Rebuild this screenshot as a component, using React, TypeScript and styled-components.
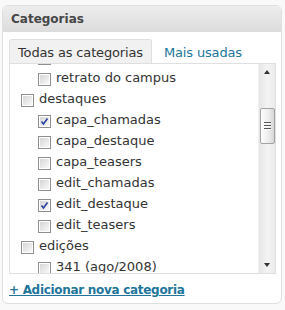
import { useLayoutEffect, useRef } from 'react';
import styled, { createGlobalStyle } from 'styled-components';

type Category = { name: string; level: number; checked?: boolean };

const categories: Category[] = [
  { name: 'agenda', level: 0 },
  { name: 'campus', level: 0 },
  { name: 'notícias do campus', level: 1 },
  { name: 'retrato do campus', level: 1 },
  { name: 'destaques', level: 0 },
  { name: 'capa_chamadas', level: 1, checked: true },
  { name: 'capa_destaque', level: 1 },
  { name: 'capa_teasers', level: 1 },
  { name: 'edit_chamadas', level: 1 },
  { name: 'edit_destaque', level: 1, checked: true },
  { name: 'edit_teasers', level: 1 },
  { name: 'edições', level: 0 },
  { name: '341 (ago/2008)', level: 1 },
  { name: '342 (set/2008)', level: 1 },
  { name: '343 (out/2008)', level: 1 },
];

const ROW = 21;
const SCROLL_TOP = 3 * ROW - 3;

export default function App() {
  const listRef = useRef<HTMLUListElement>(null);

  useLayoutEffect(() => {
    if (listRef.current) listRef.current.scrollTop = SCROLL_TOP;
  }, []);

  return (
    <>
      <GlobalStyle />
      <Panel>
        <Header>Categorias</Header>
        <Body>
          <Tabs>
            <Tab $active>Todas as categorias</Tab>
            <Tab>Mais usadas</Tab>
          </Tabs>
          <ListBox>
            <List ref={listRef}>
              {categories.map((c) => (
                <Item key={c.name} $level={c.level}>
                  <Check $checked={c.checked}>
                    {c.checked && (
                      <svg width="9" height="9" viewBox="0 0 9 9">
                        <path
                          d="M1.5 4.5 L3.5 7 L7.5 1.5"
                          fill="none"
                          stroke="#2a3f9e"
                          strokeWidth="1.6"
                        />
                      </svg>
                    )}
                  </Check>
                  {c.name}
                </Item>
              ))}
            </List>
            <Scrollbar>
              <ArrowButton>
                <Arrow $up />
              </ArrowButton>
              <Track>
                <Thumb style={{ marginTop: 28 }}>
                  <Grip />
                </Thumb>
              </Track>
              <ArrowButton>
                <Arrow />
              </ArrowButton>
            </Scrollbar>
          </ListBox>
          <AddLink href="#">+ Adicionar nova categoria</AddLink>
        </Body>
      </Panel>
    </>
  );
}

const GlobalStyle = createGlobalStyle`
  body {
    margin: 0;
    background: #f9f9f9;
    font-family: "DejaVu Sans", Verdana, sans-serif;
  }
`;

const Panel = styled.div`
  box-sizing: border-box;
  width: 280px;
  height: 299px;
  margin: 5px 0 0 2px;
  border: 1px solid #dfdfdf;
  border-radius: 6px;
  background: #fff;
  overflow: hidden;
`;

const Header = styled.h3`
  margin: 0;
  height: 26px;
  padding: 1px 0 0 8px;
  box-sizing: border-box;
  line-height: 25px;
  font-size: 12px;
  font-weight: bold;
  color: #464646;
  background: linear-gradient(#ededed, #dcdcdc);
`;

const Body = styled.div`
  display: flex;
  flex-direction: column;
  padding: 7px 5px 0 6px;
`;

const Tabs = styled.ul`
  display: flex;
  gap: 3px;
  margin: 0;
  padding: 0;
  list-style: none;
  height: 24px;
`;

const Tab = styled.li<{ $active?: boolean }>`
  box-sizing: border-box;
  height: 24px;
  padding: 2px 8px 0;
  line-height: 22px;
  font-size: 13px;
  letter-spacing: -0.15px;
  border: 1px solid ${({ $active }) => ($active ? '#dfdfdf' : 'transparent')};
  border-bottom: none;
  border-radius: 3px 3px 0 0;
  background: ${({ $active }) => ($active ? '#f1f1f1' : 'transparent')};
  color: ${({ $active }) => ($active ? '#333' : '#21759b')};
`;

const ListBox = styled.div`
  display: flex;
  height: 211px;
  box-sizing: border-box;
  border: 1px solid #dfdfdf;
  background: #fff;
`;

const List = styled.ul`
  flex: 1;
  margin: 0;
  padding: 0;
  list-style: none;
  overflow: hidden;
`;

const Item = styled.li<{ $level: number }>`
  display: flex;
  align-items: center;
  height: ${ROW}px;
  padding-left: ${({ $level }) => 11 + $level * 17}px;
  font-size: 13px;
  color: #333;
  white-space: nowrap;
`;

const Check = styled.span<{ $checked?: boolean }>`
  display: flex;
  align-items: center;
  justify-content: center;
  flex: none;
  box-sizing: border-box;
  width: 13px;
  height: 13px;
  margin: 4px 5px 0 0;
  border: 1px solid #8f8f8f;
  box-shadow: inset 0 0 0 1px #fff;
  background: linear-gradient(135deg, #d2d2d2, #f4f4f4 80%);
`;

const Scrollbar = styled.div`
  display: flex;
  flex-direction: column;
  width: 16px;
  background: linear-gradient(to right, #e6e6e6, #f3f3f3 50%, #ececec);
  border-left: 1px solid #f0f0f0;
`;

const ArrowButton = styled.div`
  display: flex;
  align-items: center;
  justify-content: center;
  height: 16px;
  flex: none;
`;

const Arrow = styled.span<{ $up?: boolean }>`
  width: 0;
  height: 0;
  border-left: 3.5px solid transparent;
  border-right: 3.5px solid transparent;
  ${({ $up }) => ($up ? 'border-bottom: 4px solid #333;' : 'border-top: 4px solid #333;')}
`;

const Track = styled.div`
  flex: 1;
  display: flex;
  flex-direction: column;
  align-items: center;
`;

const Thumb = styled.div`
  display: flex;
  align-items: center;
  justify-content: center;
  box-sizing: border-box;
  width: 15px;
  height: 36px;
  border: 1px solid #a3a3a3;
  border-radius: 2px;
  background: linear-gradient(to right, #fdfdfd, #ececec 60%, #d6d6d6);
`;

const Grip = styled.span`
  width: 7px;
  height: 8px;
  background: repeating-linear-gradient(#555 0 1px, #fafafa 1px 2px, transparent 2px 3px);
`;

const AddLink = styled.a`
  margin-top: 8px;
  align-self: flex-start;
  line-height: 16px;
  font-size: 12px;
  font-weight: bold;
  letter-spacing: -0.3px;
  color: #21759b;
`;
